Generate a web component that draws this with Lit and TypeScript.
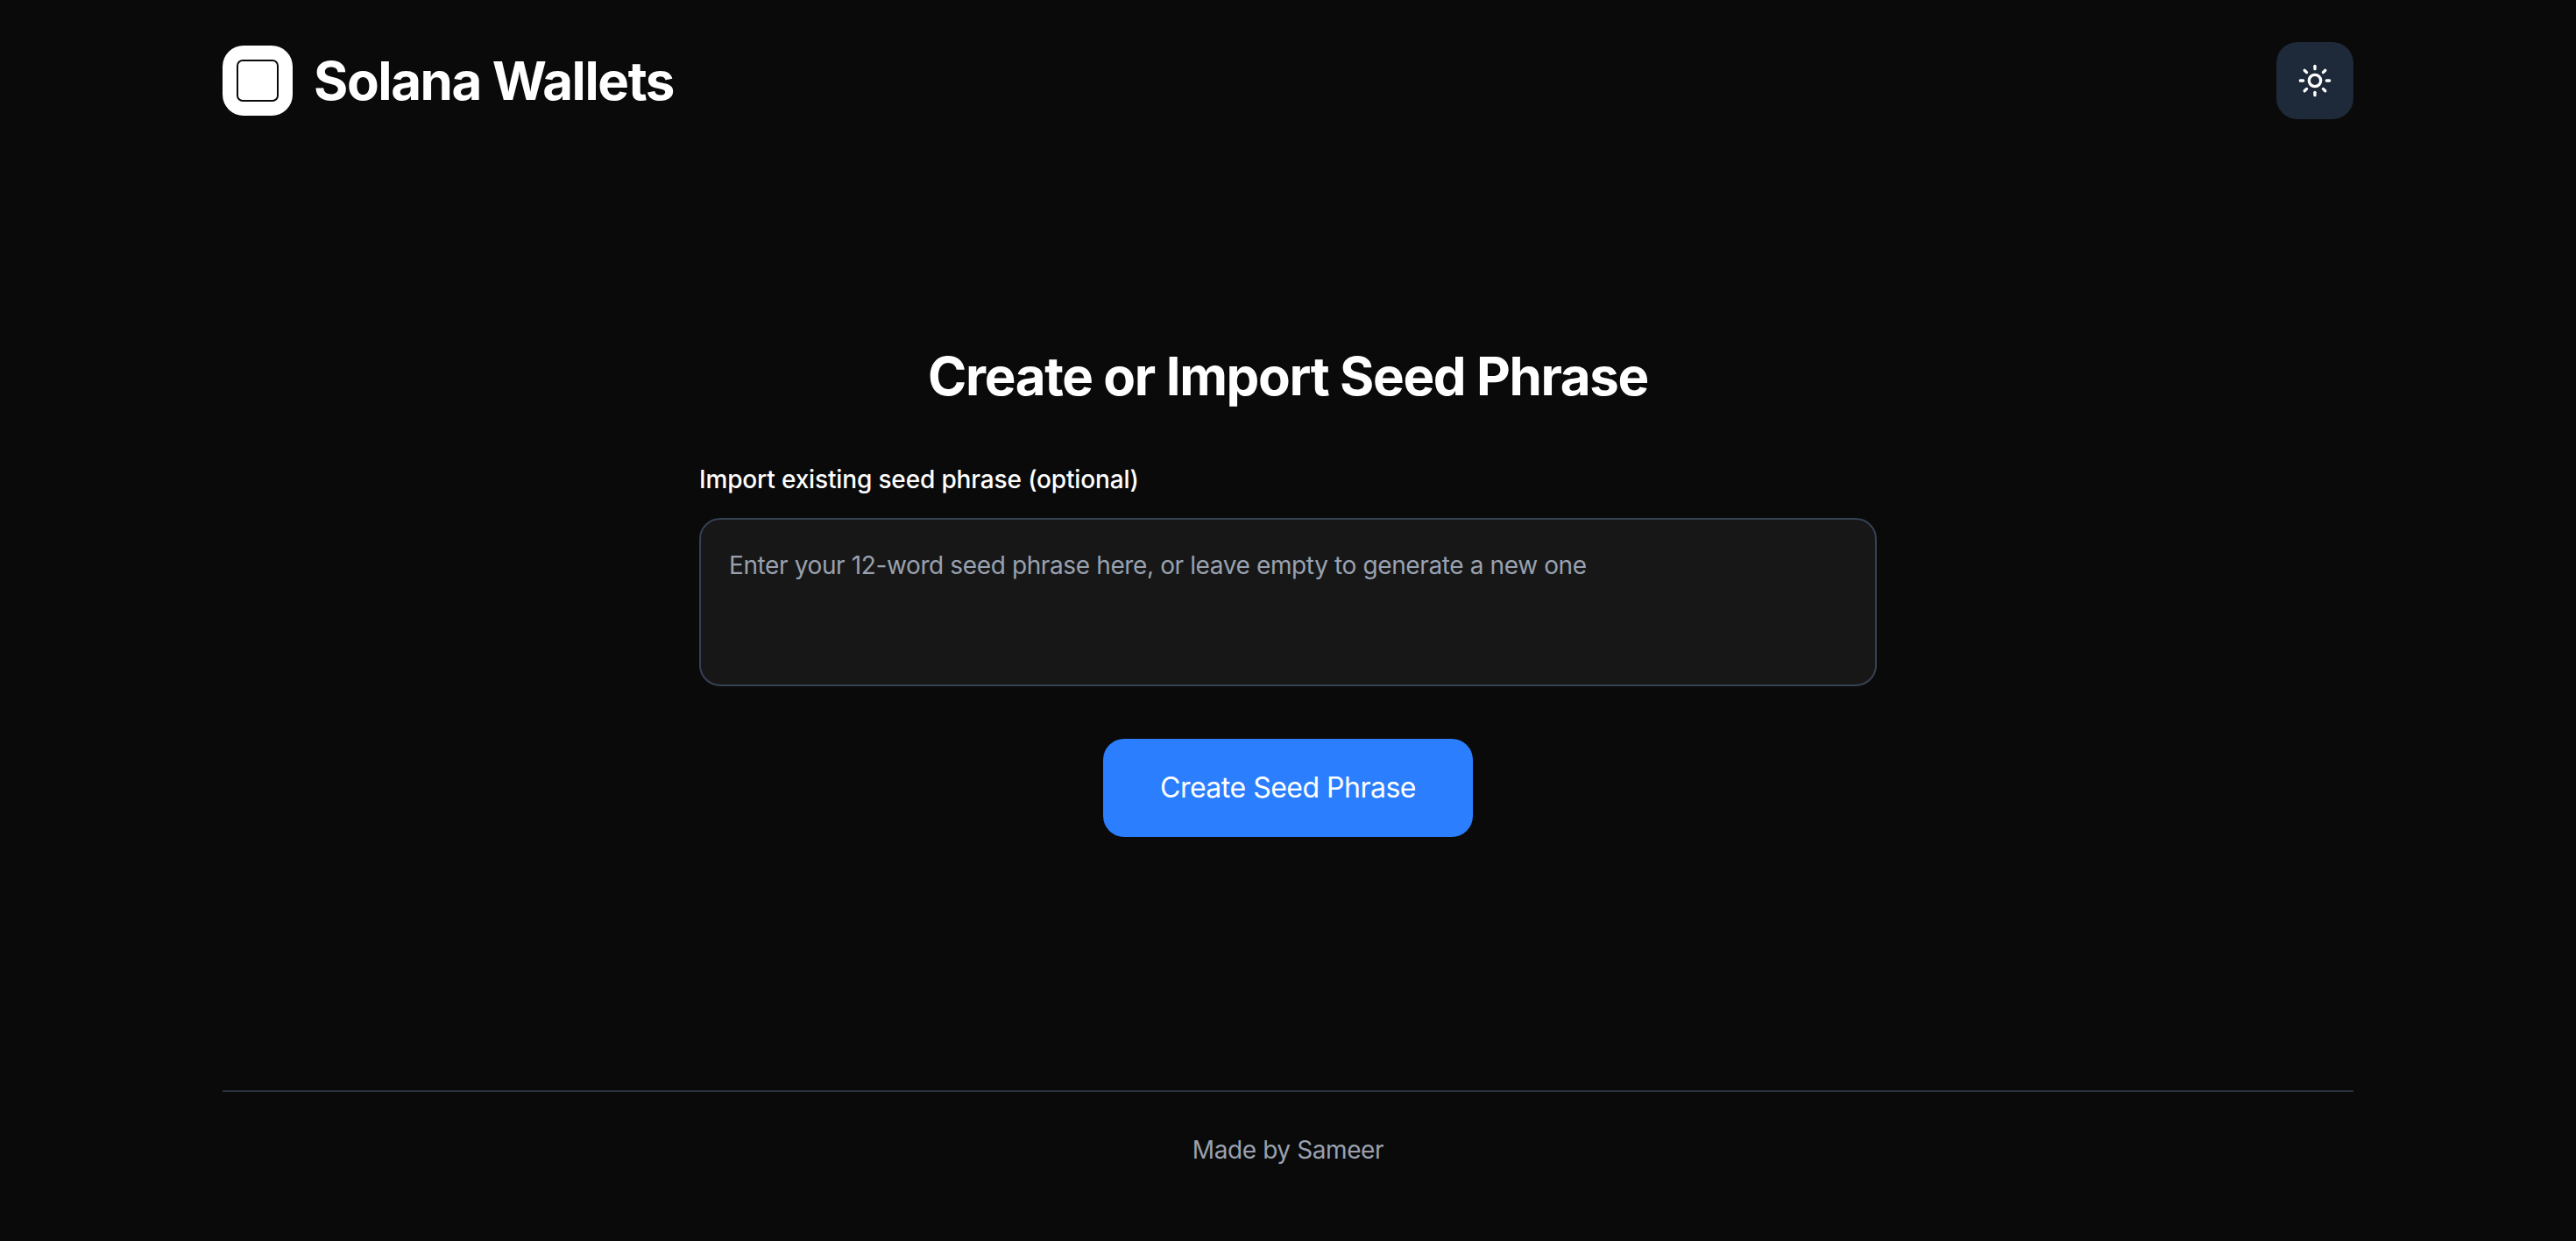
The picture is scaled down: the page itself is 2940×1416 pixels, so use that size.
import { LitElement, html, css } from 'lit';
import { customElement } from 'lit/decorators.js';

@customElement('app-root')
export class AppRoot extends LitElement {
  static styles = css`
    :host {
      display: flex;
      flex-direction: column;
      box-sizing: border-box;
      min-height: 1416px;
      padding: 0 254px;
      background: #0a0a0a;
      color: #fff;
      font-family: Inter, 'Liberation Sans', sans-serif;
    }

    header {
      display: flex;
      align-items: center;
      justify-content: space-between;
      padding-top: 48px;
    }

    .brand {
      display: flex;
      align-items: center;
      gap: 24px;
    }

    .logo {
      display: flex;
      align-items: center;
      justify-content: center;
      width: 80px;
      height: 80px;
      border-radius: 24px;
      background: #fff;
    }

    .logo svg {
      width: 48px;
      height: 48px;
    }

    .brand-name {
      font-size: 60px;
      line-height: 88px;
      font-weight: 700;
      letter-spacing: -1.4px;
    }

    .theme-btn {
      display: flex;
      align-items: center;
      justify-content: center;
      width: 88px;
      height: 88px;
      padding: 0;
      border: none;
      border-radius: 24px;
      background: #1e2939;
      color: #fff;
    }

    .theme-btn svg {
      width: 40px;
      height: 40px;
    }

    main {
      flex: 1;
      display: flex;
      flex-direction: column;
      align-items: center;
      padding-top: 257px;
    }

    h1 {
      margin: 0 0 62px;
      font-size: 60px;
      line-height: 72px;
      font-weight: 700;
      letter-spacing: -1.37px;
    }

    .form {
      display: flex;
      flex-direction: column;
      width: 1344px;
    }

    label {
      font-size: 28px;
      line-height: 40px;
      font-weight: 500;
      letter-spacing: -0.15px;
      margin-bottom: 24px;
    }

    textarea {
      box-sizing: border-box;
      width: 100%;
      height: 192px;
      padding: 32px;
      border: 2px solid #364153;
      border-radius: 24px;
      background: #171717;
      color: #fff;
      font: 400 28px/40px Inter, 'Liberation Sans', sans-serif;
      letter-spacing: -0.38px;
      resize: none;
      outline: none;
    }

    textarea::placeholder {
      color: #99a1af;
      opacity: 1;
    }

    .create-btn {
      align-self: center;
      margin-top: 60px;
      width: 422px;
      height: 112px;
      border: none;
      border-radius: 24px;
      background: #2b7fff;
      color: #fff;
      font: 400 32px/48px Inter, 'Liberation Sans', sans-serif;
      letter-spacing: -0.5px;
    }

    footer {
      box-sizing: border-box;
      height: 172px;
      padding-top: 46px;
      border-top: 2px solid #2a3342;
      text-align: center;
      font-size: 28px;
      line-height: 40px;
      letter-spacing: -0.4px;
      color: #99a1af;
    }
  `;

  render() {
    return html`
      <header>
        <div class="brand">
          <div class="logo">
            <svg viewBox="0 0 48 48" fill="none" stroke="#0a0a0a" stroke-width="2">
              <rect x="1" y="1" width="46" height="46" rx="6"></rect>
            </svg>
          </div>
          <span class="brand-name">Solana Wallets</span>
        </div>
        <button class="theme-btn" aria-label="Toggle theme">
          <svg viewBox="0 0 24 24" fill="none" stroke="currentColor" stroke-width="2" stroke-linecap="round" stroke-linejoin="round">
            <circle cx="12" cy="12" r="4"></circle>
            <path d="M12 2v2"></path>
            <path d="M12 20v2"></path>
            <path d="m4.93 4.93 1.41 1.41"></path>
            <path d="m17.66 17.66 1.41 1.41"></path>
            <path d="M2 12h2"></path>
            <path d="M20 12h2"></path>
            <path d="m6.34 17.66-1.41 1.41"></path>
            <path d="m19.07 4.93-1.41 1.41"></path>
          </svg>
        </button>
      </header>
      <main>
        <h1>Create or Import Seed Phrase</h1>
        <div class="form">
          <label for="seed">Import existing seed phrase (optional)</label>
          <textarea id="seed" placeholder="Enter your 12-word seed phrase here, or leave empty to generate a new one"></textarea>
          <button class="create-btn">Create Seed Phrase</button>
        </div>
      </main>
      <footer>Made by Sameer</footer>
    `;
  }
}
